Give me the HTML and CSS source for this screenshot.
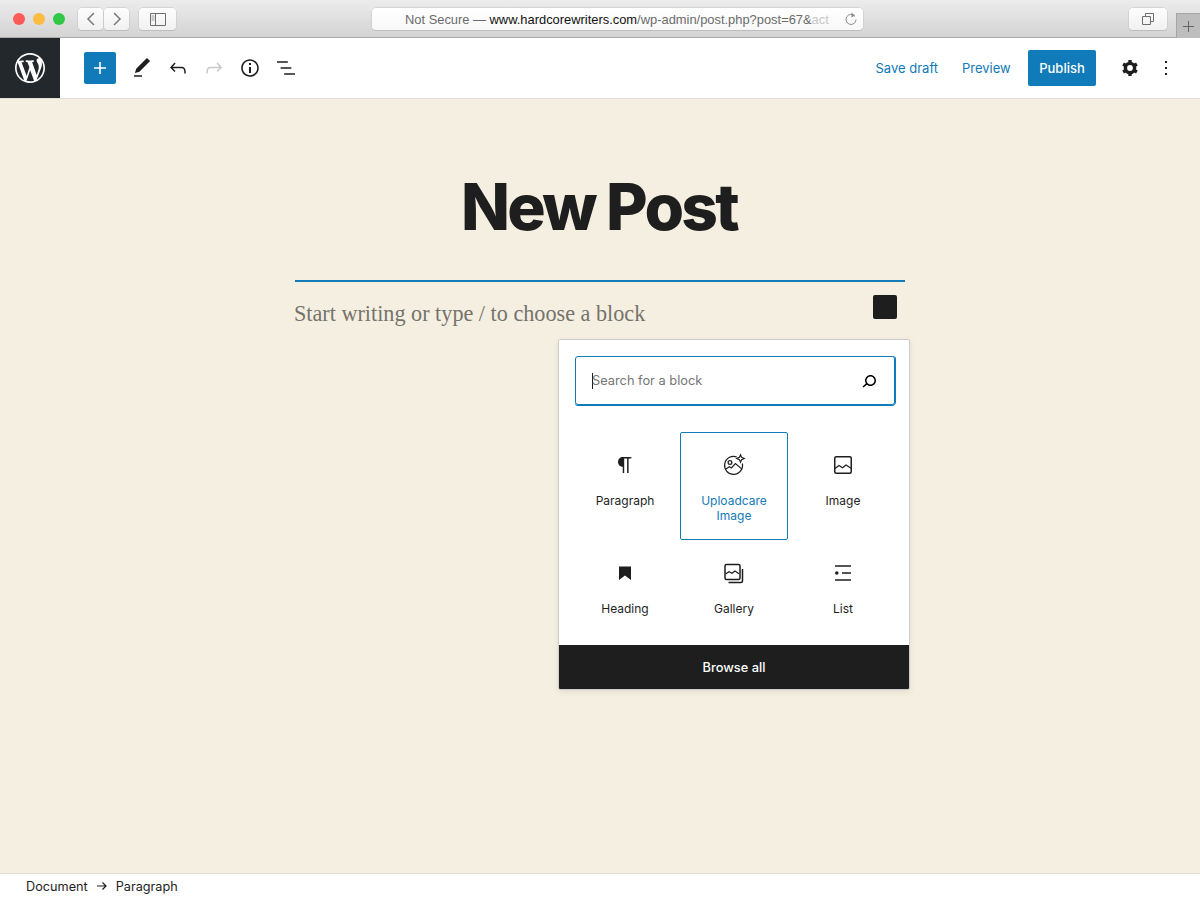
FILE: index.html
```html
<!DOCTYPE html>
<html>
  <head>
    <meta charset="utf-8">
    <title>New Post</title>
    <link rel="stylesheet" href="styles.css">
  </head>
  <body>

    <!-- Browser window bar -->
    <div class="chrome">
      <div class="lights">
        <span class="light red"></span>
        <span class="light yellow"></span>
        <span class="light green"></span>
      </div>
      <div class="nav-pair">
        <div class="chrome-btn nav-btn">
          <svg width="10" height="16" viewBox="0 0 10 16"><path d="M8 2L2 8l6 6" fill="none" stroke="#7a7a7a" stroke-width="1.5"/></svg>
        </div>
        <div class="chrome-btn nav-btn">
          <svg width="10" height="16" viewBox="0 0 10 16"><path d="M2 2l6 6-6 6" fill="none" stroke="#7a7a7a" stroke-width="1.5"/></svg>
        </div>
      </div>
      <div class="chrome-btn side-btn">
        <svg width="16" height="13" viewBox="0 0 16 13"><path d="M.5.5h15v12H.5zM5.5.5v12" fill="none" stroke="#6e6e6e"/><path d="M1.5 3h3M1.5 5h3M1.5 7h3" stroke="#9a9a9a"/></svg>
      </div>
      <div class="chrome-btn url-bar">
        <div class="url-text">Not Secure — <span class="url-host">www.hardcorewriters.com</span>/wp-admin/post.php?post=67&amp;<span class="url-fade">act</span></div>
        <svg class="reload" width="12" height="14" viewBox="0 0 12 14"><path d="M9.8 4.2A5 5 0 1 0 11 7.5" fill="none" stroke="#8a8a8a"/><path d="M6.5 0.5l3.5 3-3.5 2z" fill="#8a8a8a"/></svg>
      </div>
      <div class="chrome-btn tabs-btn">
        <svg width="12" height="12" viewBox="0 0 12 12"><path d="M.5 3.5h8v8h-8zM3.5 3.5v-3h8v8h-3" fill="none" stroke="#6e6e6e"/></svg>
      </div>
      <div class="new-tab">
        <svg width="11" height="11" viewBox="0 0 11 11"><path d="M5.5 0v11M0 5.5h11" stroke="#666"/></svg>
      </div>
    </div>

    <!-- Editor toolbar -->
    <div class="toolbar">
      <div class="wp-logo">
        <svg width="30" height="30" viewBox="0 0 20 20"><path fill="#fff" d="M20 10c0-5.51-4.49-10-10-10C4.48 0 0 4.49 0 10c0 5.52 4.48 10 10 10 5.51 0 10-4.48 10-10zM7.78 15.37L4.37 6.22c.55-.02 1.17-.08 1.17-.08.5-.06.44-1.13-.06-1.11 0 0-1.45.11-2.37.11-.18 0-.37 0-.58-.01C4.12 2.69 6.87 1.11 10 1.11c2.33 0 4.45.87 6.05 2.34-.68-.11-1.65.39-1.65 1.58 0 .74.45 1.36.9 2.1.35.61.55 1.36.55 2.46 0 1.49-1.4 5-1.4 5l-3.03-8.37c.54-.02.82-.17.82-.17.5-.05.44-1.25-.06-1.22 0 0-1.44.12-2.38.12-.87 0-2.33-.12-2.33-.12-.5-.03-.56 1.2-.06 1.22l.92.08 1.26 3.41zM17.41 10c.24-.64.74-1.87.43-4.25.7 1.29 1.05 2.71 1.05 4.25 0 3.29-1.73 6.24-4.4 7.78.97-2.59 1.94-5.2 2.92-7.78zM6.1 18.09C3.12 16.65 1.11 13.53 1.11 10c0-1.3.23-2.48.72-3.59C3.25 10.3 4.67 14.2 6.1 18.09zm4.03-6.63l2.58 6.98c-.86.29-1.76.45-2.71.45-.79 0-1.57-.11-2.29-.33.81-2.38 1.62-4.74 2.42-7.1z"/></svg>
      </div>
      <div class="tools-left">
        <div class="inserter">
          <svg width="24" height="24" viewBox="0 0 24 24"><path fill="#fff" d="M18 11.2h-5.2V6h-1.6v5.2H6v1.6h5.2V18h1.6v-5.2H18z"/></svg>
        </div>
        <div class="tool">
          <svg width="24" height="24" viewBox="0 0 24 24"><path d="M20.1 5.1L16.9 2 6.2 12.7l-1.3 4.4 4.5-1.3L20.1 5.1zM4 20.8h8v-1.5H4v1.5z"/></svg>
        </div>
        <div class="tool">
          <svg width="24" height="24" viewBox="0 0 24 24"><path d="M18.3 11.7c-.6-.6-1.4-.9-2.3-.9H6.7l2.9-3.3-1.1-1-4.5 5L8.5 16l1-1-2.7-2.7H16c.5 0 .9.2 1.3.5 1 1 1 3.4 1 4.5v.3h1.5v-.2c0-1.5 0-4.3-1.5-5.7z"/></svg>
        </div>
        <div class="tool disabled">
          <svg width="24" height="24" viewBox="0 0 24 24"><path d="M15.6 6.5l-1.1 1 2.9 3.3H8c-.9 0-1.7.3-2.3.9-1.4 1.5-1.4 4.2-1.4 5.6v.2h1.5v-.3c0-1.1 0-3.5 1-4.5.3-.3.7-.5 1.3-.5h9.2L14.5 15l1.1 1.1 4.6-4.6-4.6-5z"/></svg>
        </div>
        <div class="tool">
          <svg width="24" height="24" viewBox="0 0 24 24"><path d="M12 3.2c-4.8 0-8.8 3.9-8.8 8.8 0 4.8 3.9 8.8 8.8 8.8 4.8 0 8.8-3.9 8.8-8.8 0-4.8-4-8.8-8.8-8.8zm0 16c-4 0-7.2-3.3-7.2-7.2C4.8 8 8 4.8 12 4.8s7.2 3.3 7.2 7.2c0 4-3.2 7.2-7.2 7.2zM11 17h2v-6h-2v6zm0-8h2V7h-2v2z"/></svg>
        </div>
        <div class="tool">
          <svg width="24" height="24" viewBox="0 0 24 24"><path d="M13.8 5.2H3v1.5h10.8V5.2zm-3.6 12v1.5H21v-1.5H10.2zm7.2-6H6.6v1.5h10.8v-1.5z"/></svg>
        </div>
      </div>
      <div class="tools-right">
        <span class="link save">Save draft</span>
        <span class="link preview">Preview</span>
        <span class="publish">Publish</span>
        <div class="tool">
          <svg width="24" height="24" viewBox="0 0 24 24" fill="none" stroke="#1e1e1e"><circle cx="12" cy="12" r="4.6" stroke-width="3.4"/><path stroke-width="3.4" d="M12 4v3M12 17v3M5.1 8l2.6 1.5M16.3 14.5l2.6 1.5M5.1 16l2.6-1.5M16.3 9.5L18.9 8"/></svg>
        </div>
        <div class="tool">
          <svg width="24" height="24" viewBox="0 0 24 24"><path d="M13 19h-2v-2h2v2zm0-6h-2v-2h2v2zm0-6h-2V5h2v2z"/></svg>
        </div>
      </div>
    </div>

    <!-- Post area -->
    <div class="editor">
      <h1 class="post-title">New Post</h1>
      <div class="block">
        <span class="placeholder">Start writing or type / to choose a block</span>
        <span class="block-square"></span>
      </div>

      <div class="popover">
        <div class="search">
          <span class="caret"></span>
          <span class="search-text">Search for a block</span>
          <svg width="24" height="24" viewBox="0 0 24 24"><path d="M13.5 6C10.5 6 8 8.5 8 11.5c0 1.1.3 2.1.9 3l-3.4 3 1 1.1 3.4-2.9c1 .9 2.2 1.4 3.6 1.4 3 0 5.5-2.5 5.5-5.5C19 8.5 16.5 6 13.5 6zm0 9.5c-2.2 0-4-1.8-4-4s1.8-4 4-4 4 1.8 4 4-1.8 4-4 4z"/></svg>
        </div>
        <div class="tiles">
          <div class="tile">
            <svg width="24" height="24" viewBox="0 0 24 24"><path d="M18.3 4H9.9v-.1l-.9.2c-2.3.4-4 2.4-4 4.8s1.7 4.4 4 4.8l.7.1V20h1.5V5.5h2.9V20h1.5V5.5h2.7V4z"/></svg>
            <span>Paragraph</span>
          </div>
          <div class="tile selected">
            <svg width="24" height="24" viewBox="0 0 24 24" fill="none" stroke="#1e1e1e" stroke-width="1.2"><path d="M14.8 4A9 9 0 1 0 20.4 10.5"/><circle cx="8" cy="9.5" r="1.9"/><path d="M3.4 16.2l4-2.4 2 1.2 4-4.4 6 5"/><path d="M18.5 1.8l1.1 2.6 2.6 1.1-2.6 1.1-1.1 2.6-1.1-2.6-2.6-1.1 2.6-1.1z" fill="#fff"/></svg>
            <span>Uploadcare Image</span>
          </div>
          <div class="tile">
            <svg width="24" height="24" viewBox="0 0 24 24" fill="none" stroke="#1e1e1e" stroke-width="1.5"><rect x="3.75" y="3.75" width="16.5" height="16.5" rx="1.5"/><path d="M4 15.5l4-3 3.5 2.2 3.5-2.7 5 3.2" stroke-width="1.2"/></svg>
            <span>Image</span>
          </div>
          <div class="tile">
            <svg width="24" height="24" viewBox="0 0 24 24"><path d="M6 5.5h12V19l-6-4.6L6 19z"/></svg>
            <span>Heading</span>
          </div>
          <div class="tile">
            <svg width="24" height="24" viewBox="0 0 24 24" fill="none" stroke="#1e1e1e" stroke-width="1.5"><rect x="3" y="3.5" width="15" height="15" rx="1.5"/><path d="M3.5 13l3.5-2.3 3 1.6 3-2.2 4 2.6" stroke-width="1.2"/><path d="M6.5 21.5H19a1.5 1.5 0 0 0 1.5-1.5V8"/></svg>
            <span>Gallery</span>
          </div>
          <div class="tile">
            <svg width="24" height="24" viewBox="0 0 24 24"><path d="M4 4.2h16v1.5H4zM4 18.2h16v1.5H4zM11 11.2h9v1.5h-9z"/><circle cx="5.8" cy="12" r="1.8"/></svg>
            <span>List</span>
          </div>
        </div>
        <div class="browse">Browse all</div>
      </div>
    </div>

    <!-- Breadcrumb footer -->
    <div class="footer">
      <span>Document</span>
      <svg width="12" height="12" viewBox="0 0 12 12"><path d="M1 6h9M6.5 2.5L10 6l-3.5 3.5" fill="none" stroke="#1e1e1e" stroke-width="1.2"/></svg>
      <span>Paragraph</span>
    </div>

  </body>
</html>
```

FILE: styles.css
```css
*{
  box-sizing: border-box;
}

html, body{
  margin: 0;
  height: 100%;
}

body{
  display: flex;
  flex-direction: column;
  height: 898px;
  overflow: hidden;
  font-family: Inter, "Liberation Sans", sans-serif;
  font-size: 13px;
  color: #1e1e1e;
}

/* browser bar */
.chrome{
  display: flex;
  align-items: flex-start;
  flex: none;
  height: 38px;
  padding: 8px 0 0 13px;
  background: linear-gradient(#ececec, #d3d3d3);
  border-bottom: 1px solid #ababab;
}

.lights{
  display: flex;
  gap: 8px;
  margin-top: 5px;
}

.light{
  width: 12px;
  height: 12px;
  border-radius: 50%;
}

.red{ background: #fc5b57; }
.yellow{ background: #fdbc40; }
.green{ background: #33c748; }

.chrome-btn{
  display: flex;
  align-items: center;
  justify-content: center;
  height: 22px;
  background: linear-gradient(#fdfdfd, #f1f1f1);
  border-radius: 4px;
  box-shadow: 0 0 0 .5px #c4c4c4, 0 1px 0 #b8b8b8;
}

.nav-pair{
  display: flex;
  gap: 1px;
  margin-left: 13px;
}

.nav-btn{
  width: 25px;
}

.side-btn{
  width: 37px;
  margin-left: 10px;
}

.url-bar{
  position: relative;
  width: 491px;
  margin-left: 196px;
  background: linear-gradient(#ffffff, #f8f8f8);
  font-family: "Liberation Sans", sans-serif;
  font-size: 12.9px;
  color: #6b6b6b;
}

.url-text{
  width: 491px;
  padding-left: 33px;
  white-space: nowrap;
}

.url-host{
  color: #111;
}

.url-fade{
  color: #c8c8c8;
}

.reload{
  position: absolute;
  right: 6px;
  top: 4px;
}

.tabs-btn{
  width: 38px;
  margin-left: 266px;
}

.new-tab{
  display: flex;
  align-items: center;
  justify-content: center;
  width: 24px;
  height: 25px;
  margin: 5px 0 0 9px;
  background: #bdbdbd;
  border-left: 1px solid #a6a6a6;
  border-top: 1px solid #a6a6a6;
}

/* editor toolbar */
.toolbar{
  display: flex;
  align-items: center;
  flex: none;
  height: 61px;
  background: #fff;
  border-bottom: 1px solid #e2e0d8;
}

.wp-logo{
  display: flex;
  align-items: center;
  justify-content: center;
  width: 60px;
  height: 60px;
  background: #23282d;
}

.tools-left{
  display: flex;
  align-items: center;
  margin-left: 24px;
}

.inserter{
  display: flex;
  align-items: center;
  justify-content: center;
  width: 32px;
  height: 32px;
  margin-right: 8px;
  background: #117ab8;
  border-radius: 2px;
}

.tool{
  display: flex;
  align-items: center;
  justify-content: center;
  width: 36px;
  height: 36px;
}

.tool path{
  fill: #1e1e1e;
}

.tool svg[fill="none"] path{
  fill: none;
}

.disabled path{
  fill: #c9c9c9;
}

.tools-right{
  display: flex;
  align-items: center;
  margin-left: auto;
  padding-right: 16px;
}

.link{
  color: #117ab8;
}

.save{
  margin-right: 24px;
}

.preview{
  width: 48px;
  margin-right: 18px;
  white-space: nowrap;
}

.publish{
  display: flex;
  align-items: center;
  justify-content: center;
  width: 68px;
  height: 36px;
  margin-right: 16px;
  background: #117ab8;
  border-radius: 2px;
  color: #fff;
  font-weight: 500;
}

/* post area */
.editor{
  position: relative;
  flex: 1;
  background: #f5efe1;
}

.post-title{
  margin: 70px 0 0;
  height: 111px;
  padding-right: 2px;
  font-size: 64px;
  line-height: 75px;
  font-weight: 800;
  letter-spacing: -2.7px;
  text-align: center;
}

.block{
  display: flex;
  justify-content: space-between;
  width: 610px;
  height: 50px;
  margin: 0 auto;
  padding: 13px 8px 0 0;
  border-top: 2px solid #117ab8;
}

.placeholder{
  margin: 2px 0 0 -1px;
  font-family: "Liberation Serif", serif;
  font-size: 22.2px;
  line-height: 34px;
  color: #75736b;
}

.block-square{
  width: 24px;
  height: 24px;
  background: #1e1e1e;
  border-radius: 2px;
}

/* block inserter popover */
.popover{
  position: absolute;
  left: 558px;
  top: 240px;
  width: 352px;
  height: 351px;
  background: #fff;
  border: 1px solid #ccc;
  border-radius: 2px;
  box-shadow: 0 2px 6px rgba(0,0,0,.08);
  overflow: hidden;
}

.search{
  display: flex;
  align-items: center;
  width: 320px;
  height: 49px;
  margin: 16px 0 0 16px;
  padding: 0 13px 0 16px;
  border: 1px solid #117ab8;
  border-radius: 3px;
  box-shadow: 0 1px 0 #117ab8, 1px 0 0 #117ab8;
}

.caret{
  width: 1px;
  height: 16px;
  background: #1e1e1e;
}

.search-text{
  flex: 1;
  margin: -1px 0 0 -1px;
  font-size: 12.8px;
  color: #757575;
}

.tiles{
  display: grid;
  grid-template-columns: repeat(3, 108px);
  grid-auto-rows: 108px;
  column-gap: 1px;
  margin: 27px 0 0 12px;
}

.tile{
  display: flex;
  flex-direction: column;
  align-items: center;
  padding: 21px 12px 0;
  text-align: center;
  font-size: 12px;
  line-height: 15px;
  border-radius: 2px;
}

.tile svg{
  flex: none;
  margin-bottom: 16px;
}

.tile path, .tile circle{
  fill: #1e1e1e;
}

.tile svg[fill="none"] path, .tile svg[fill="none"] circle{
  fill: none;
}

.selected{
  border: 1px solid #117ab8;
  padding-top: 20px;
  color: #117ab8;
}

.browse{
  display: flex;
  align-items: center;
  justify-content: center;
  position: absolute;
  left: 0;
  right: 0;
  bottom: 0;
  height: 44px;
  background: #1e1e1e;
  color: #fff;
  font-size: 12.8px;
  font-weight: 500;
}

/* footer */
.footer{
  display: flex;
  align-items: center;
  gap: 8px;
  flex: none;
  height: 25px;
  padding-left: 26px;
  background: #fff;
  border-top: 1px solid #e2e0d8;
  font-size: 12.7px;
}
```
